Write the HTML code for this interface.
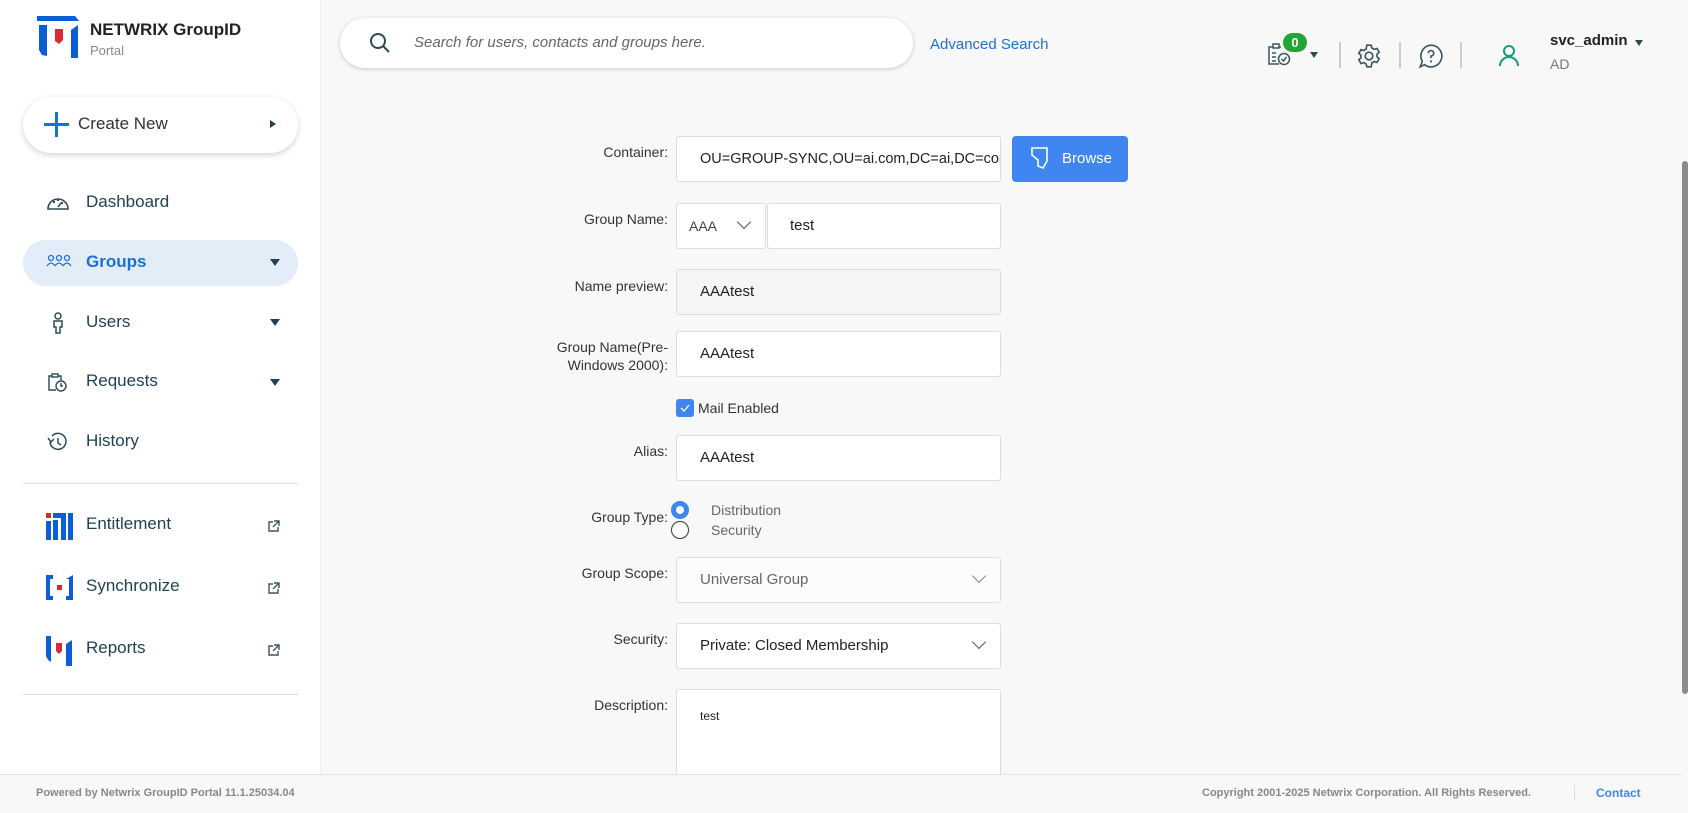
<!DOCTYPE html>
<html><head><meta charset="utf-8"><style>
*{box-sizing:border-box;margin:0;padding:0}
body{width:1688px;height:813px;overflow:hidden;background:#f8f8f8;font-family:"Liberation Sans",sans-serif;position:relative;color:#333}
.a{position:absolute}
.side{left:0;top:0;width:321px;height:774px;background:#fff;border-right:1px solid #eee}
.nav{position:absolute;left:86px;font-size:17px;color:#1e4252}
.ico{position:absolute;left:46px}
.caret{position:absolute;left:270px;width:0;height:0;border-left:5px solid transparent;border-right:5px solid transparent;border-top:7px solid #1e4252}
.ext{position:absolute;left:267px}
.lbl{position:absolute;right:1020px;font-size:14px;color:#333;text-align:right;line-height:18px}
.inp{position:absolute;left:676px;width:325px;height:46px;background:#fff;border:1px solid #ddd;border-radius:3px;font-size:15px;color:#222;padding:0 23px;line-height:44px}
.chev{position:absolute;right:14px;top:15px;width:10px;height:10px;border-right:1.6px solid #555;border-bottom:1.6px solid #555;transform:rotate(45deg)}
</style></head><body>
<div class="a side"></div>
<svg class="a" style="left:37px;top:16px" width="43" height="42" viewBox="0 0 43 42"><path d="M0 0H38L42 5H0Z" fill="#0b5ed7"/><path d="M2 9H10V40L5 39L2 34Z" fill="#0b5ed7"/><path d="M18 13H26V24L22 28L18 25Z" fill="#d62b33"/><path d="M34 14L41 9V42H34Z" fill="#0b5ed7"/></svg>
<div class="a" style="left:90px;top:20px;font-size:17px;font-weight:bold;color:#222">NETWRIX GroupID</div>
<div class="a" style="left:90px;top:43px;font-size:13px;color:#888">Portal</div>
<div class="a" style="left:23px;top:97px;width:275px;height:56px;border-radius:28px;background:#fff;box-shadow:0 2px 6px rgba(0,0,0,.18)"></div>
<div class="a" style="left:44px;top:123px;width:25px;height:3px;background:#1d6fd6"></div>
<div class="a" style="left:55px;top:112px;width:3px;height:25px;background:#1d6fd6"></div>
<div class="a" style="left:78px;top:114px;font-size:17px;color:#333">Create New</div>
<div class="a" style="left:270px;top:120px;border-top:4px solid transparent;border-bottom:4px solid transparent;border-left:6px solid #1e4252"></div>
<div class="a" style="left:23px;top:240px;width:275px;height:46px;border-radius:23px;background:#e3edf8"></div>
<svg class="ico" style="top:193px" width="24" height="18" viewBox="0 0 24 18"><path d="M2 16A10 10 0 0 1 22 16Z" fill="none" stroke="#2c4a55" stroke-width="1.6"/><circle cx="8" cy="9" r="1.2" fill="#2c4a55"/><circle cx="12" cy="7" r="1.2" fill="#2c4a55"/><circle cx="16" cy="10" r="1.2" fill="#2c4a55"/><path d="M12 14L15 10" stroke="#2c4a55" stroke-width="1.5"/></svg>
<div class="nav" style="top:192px">Dashboard</div>
<svg class="ico" style="top:254px" width="26" height="14" viewBox="0 0 26 14"><g fill="none" stroke="#1d6fd6" stroke-width="1.3"><circle cx="5" cy="4" r="2.5"/><circle cx="13" cy="4" r="2.5"/><circle cx="21" cy="4" r="2.5"/><path d="M1 12Q5 6 9 12M9 12Q13 6 17 12M17 12Q21 6 25 12"/></g></svg>
<div class="nav" style="top:252px;color:#1d6fd6;font-weight:bold">Groups</div>
<div class="caret" style="top:259px"></div>
<svg class="ico" style="top:312px;left:51px" width="14" height="22" viewBox="0 0 14 22"><g fill="none" stroke="#2c4a55" stroke-width="1.5"><circle cx="7" cy="4" r="3"/><path d="M3 9H11V15H9V21H5V15H3Z"/></g></svg>
<div class="nav" style="top:312px">Users</div>
<div class="caret" style="top:319px"></div>
<svg class="ico" style="top:372px" width="22" height="20" viewBox="0 0 22 20"><g fill="none" stroke="#2c4a55" stroke-width="1.4"><path d="M10 18H3V4H6M12 4H15V8"/><rect x="6" y="2" width="6" height="3"/><circle cx="15" cy="14" r="5"/><path d="M15 11V14H17"/></g></svg>
<div class="nav" style="top:371px">Requests</div>
<div class="caret" style="top:379px"></div>
<svg class="ico" style="top:432px" width="22" height="20" viewBox="0 0 22 20"><g fill="none" stroke="#2c4a55" stroke-width="1.5"><path d="M4 10A8 8 0 1 0 6 4"/><path d="M2 6L5 10L8 7"/><path d="M12 6V11L15 13"/></g></svg>
<div class="nav" style="top:431px">History</div>
<div class="a" style="left:23px;top:483px;width:275px;height:1px;background:#ddd"></div>
<svg class="ico" style="top:513px" width="27" height="27" viewBox="0 0 27 27"><rect x="0" y="0" width="5" height="5" fill="#d62b33"/><rect x="0" y="8" width="5" height="19" fill="#0b5ed7"/><rect x="7" y="7" width="5" height="20" fill="#0b5ed7"/><rect x="7" y="0" width="13" height="5" fill="#0b5ed7"/><rect x="15" y="0" width="5" height="27" fill="#0b5ed7"/><rect x="22" y="0" width="5" height="27" fill="#0b5ed7"/></svg>
<div class="nav" style="top:514px">Entitlement</div>
<svg class="ext" style="top:520px" width="13" height="13" viewBox="0 0 13 13"><g fill="none" stroke="#3a5560" stroke-width="1.4"><path d="M6 2H2V11H11V7"/><path d="M7 1H12V6M12 1L6 7"/></g></svg>
<svg class="ico" style="top:575px" width="27" height="25" viewBox="0 0 27 25"><path d="M0 0H7V4H4V21H7V25H0Z" fill="#0b5ed7"/><rect x="11" y="10" width="5" height="5" fill="#d62b33"/><path d="M20 4L27 0V25H20V21H23V4Z" fill="#0b5ed7"/></svg>
<div class="nav" style="top:576px">Synchronize</div>
<svg class="ext" style="top:582px" width="13" height="13" viewBox="0 0 13 13"><g fill="none" stroke="#3a5560" stroke-width="1.4"><path d="M6 2H2V11H11V7"/><path d="M7 1H12V6M12 1L6 7"/></g></svg>
<svg class="ico" style="top:636px" width="27" height="30" viewBox="0 0 27 30"><path d="M0 0H5V26L2 24L0 20Z" fill="#0b5ed7"/><path d="M10 7H16V15L13 18L10 15Z" fill="#d62b33"/><path d="M20 8L26 4V30H20Z" fill="#0b5ed7"/></svg>
<div class="nav" style="top:638px">Reports</div>
<svg class="ext" style="top:644px" width="13" height="13" viewBox="0 0 13 13"><g fill="none" stroke="#3a5560" stroke-width="1.4"><path d="M6 2H2V11H11V7"/><path d="M7 1H12V6M12 1L6 7"/></g></svg>
<div class="a" style="left:23px;top:694px;width:275px;height:1px;background:#ddd"></div>

<div class="a" style="left:340px;top:18px;width:573px;height:50px;border-radius:25px;background:#fff;box-shadow:0 1px 4px rgba(0,0,0,.2)"></div>
<svg class="a" style="left:369px;top:32px" width="22" height="22" viewBox="0 0 22 22"><circle cx="9" cy="9" r="7" fill="none" stroke="#2c4a55" stroke-width="2"/><path d="M14 14L20 20" stroke="#2c4a55" stroke-width="2"/></svg>
<div class="a" style="left:414px;top:34px;font-size:15px;font-style:italic;color:#666">Search for users, contacts and groups here.</div>
<div class="a" style="left:930px;top:36px;font-size:15px;color:#1d6fd6">Advanced Search</div>
<svg class="a" style="left:1267px;top:41px" width="24" height="26" viewBox="0 0 24 26"><g fill="none" stroke="#3a5560" stroke-width="1.5"><path d="M12 23H2V6H6M12 6H14"/><rect x="6" y="3" width="6" height="4"/><path d="M5 12H9M5 16H9M5 20H9"/><circle cx="17" cy="18" r="5.5"/><path d="M14.5 18L16.5 20L19.5 16"/></g></svg>
<div class="a" style="left:1283px;top:33px;width:24px;height:19px;border-radius:10px;background:#21a535;color:#fff;font-size:13px;font-weight:bold;text-align:center;line-height:19px">0</div>
<div class="a" style="left:1310px;top:52px;border-left:4px solid transparent;border-right:4px solid transparent;border-top:6px solid #2c4a55"></div>
<div class="a" style="left:1339px;top:42px;width:2px;height:26px;background:#ccc"></div>
<svg class="a" style="left:1356px;top:43px" width="26" height="26" viewBox="0 0 24 24"><g fill="none" stroke="#3a5560" stroke-width="1.5"><circle cx="12" cy="12" r="3.5"/><path d="M10 2h4l.6 2.6 2.2 1.3 2.6-.8 2 3.4-2 1.8v2.4l2 1.8-2 3.4-2.6-.8-2.2 1.3L14 22h-4l-.6-2.6-2.2-1.3-2.6.8-2-3.4 2-1.8v-2.4l-2-1.8 2-3.4 2.6.8 2.2-1.3Z"/></g></svg>
<div class="a" style="left:1399px;top:42px;width:2px;height:26px;background:#ccc"></div>
<svg class="a" style="left:1418px;top:43px" width="26" height="26" viewBox="0 0 24 24"><g fill="none" stroke="#3a5560" stroke-width="1.5"><path d="M12 2A10 10 0 1 1 6 20L2 22L4 17A10 10 0 0 1 12 2Z"/><path d="M9.5 9.5A2.5 2.5 0 1 1 12 12V14"/></g><circle cx="12" cy="17" r="1" fill="#3a5560"/></svg>
<div class="a" style="left:1460px;top:42px;width:2px;height:26px;background:#ccc"></div>
<svg class="a" style="left:1497px;top:43px" width="24" height="24" viewBox="0 0 24 24"><g fill="none" stroke="#1a9a7a" stroke-width="2"><circle cx="12" cy="8" r="5"/><path d="M3 23A9 9 0 0 1 21 23"/></g></svg>
<div class="a" style="left:1550px;top:32px;font-size:15px;font-weight:bold;color:#222">svc_admin</div>
<div class="a" style="left:1635px;top:40px;border-left:4px solid transparent;border-right:4px solid transparent;border-top:6px solid #2c4a55"></div>
<div class="a" style="left:1550px;top:56px;font-size:14px;color:#777">AD</div>

<div class="lbl" style="top:143px">Container:</div>
<div class="inp" style="top:136px;overflow:hidden;white-space:nowrap;font-size:14.5px">OU=GROUP-SYNC,OU=ai.com,DC=ai,DC=com</div>
<div class="a" style="left:1012px;top:136px;width:116px;height:46px;border-radius:4px;background:#3f86f0;color:#fff;font-size:15px;line-height:46px;padding-left:50px">Browse</div>
<svg class="a" style="left:1031px;top:147px" width="18" height="22" viewBox="0 0 18 22"><path d="M1 1H16V14L12 21L7 19V13L1 8Z" fill="none" stroke="#fff" stroke-width="1.6"/></svg>
<div class="lbl" style="top:210px">Group Name:</div>
<div class="inp" style="top:203px;width:90px;padding:0 12px;font-size:14px;color:#444">AAA<div class="chev" style="right:16px;top:13px"></div></div>
<div class="inp" style="top:203px;left:767px;width:234px;padding-left:22px">test</div>
<div class="lbl" style="top:277px">Name preview:</div>
<div class="inp" style="top:269px;background:#f5f5f5">AAAtest</div>
<div class="lbl" style="top:338px">Group Name(Pre-<br>Windows 2000):</div>
<div class="inp" style="top:331px">AAAtest</div>
<div class="a" style="left:676px;top:399px;width:18px;height:18px;border-radius:3px;background:#3f86f0"></div>
<svg class="a" style="left:679px;top:402px" width="12" height="12" viewBox="0 0 12 12"><path d="M2 6L5 9L10 3" fill="none" stroke="#fff" stroke-width="1.3"/></svg>
<div class="a" style="left:698px;top:400px;font-size:14px;color:#333">Mail Enabled</div>
<div class="lbl" style="top:442px">Alias:</div>
<div class="inp" style="top:435px">AAAtest</div>
<div class="lbl" style="top:508px">Group Type:</div>
<div class="a" style="left:671px;top:501px;width:18px;height:18px;border-radius:50%;border:5px solid #3f86f0;background:#fff"></div>
<div class="a" style="left:671px;top:521px;width:18px;height:18px;border-radius:50%;border:1.3px solid #333;background:#fff"></div>
<div class="a" style="left:711px;top:502px;font-size:14px;color:#666">Distribution</div>
<div class="a" style="left:711px;top:522px;font-size:14px;color:#666">Security</div>
<div class="lbl" style="top:564px">Group Scope:</div>
<div class="inp" style="top:557px;background:#fcfcfc;color:#666">Universal Group<div class="chev" style="right:16px;top:13px;border-color:#888"></div></div>
<div class="lbl" style="top:630px">Security:</div>
<div class="inp" style="top:623px">Private: Closed Membership<div class="chev" style="right:16px;top:13px"></div></div>
<div class="lbl" style="top:696px">Description:</div>
<div class="inp" style="top:689px;height:100px;font-size:12px;line-height:18px;padding-top:17px">test</div>

<div class="a" style="left:0;top:774px;width:1682px;height:39px;background:#f8f8f8;border-top:1px solid #e2e2e2"></div>
<div class="a" style="left:36px;top:787px;font-size:11px;font-weight:bold;color:#888">Powered by Netwrix GroupID Portal 11.1.25034.04</div>
<div class="a" style="left:1202px;top:787px;font-size:11px;font-weight:bold;color:#888">Copyright 2001-2025 Netwrix Corporation. All Rights Reserved.</div>
<div class="a" style="left:1574px;top:785px;width:1px;height:16px;background:#ddd"></div>
<div class="a" style="left:1596px;top:786px;font-size:12px;font-weight:bold;color:#3f86f0">Contact</div>
<div class="a" style="left:1682px;top:161px;width:6px;height:533px;border-radius:3px;background:#8a8a8a"></div>
</body></html>
